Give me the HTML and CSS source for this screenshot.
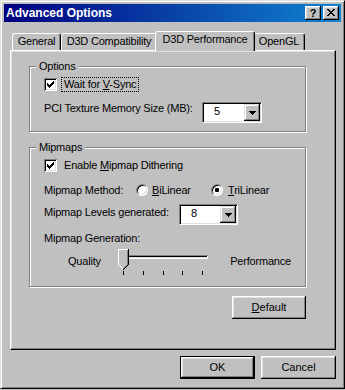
FILE: index.html
```html
<!DOCTYPE html>
<html lang="en">

<head>
    <meta charset="UTF-8">
    <title>Advanced Options</title>
    <link rel="stylesheet" href="styles.css">
</head>

<body>
    <div class="window">
        <div class="titlebar">
            <span class="caption">Advanced Options</span>
            <span class="capbtn help">?</span>
            <span class="capbtn close">
                <svg width="8" height="7" viewBox="0 0 8 7" shape-rendering="crispEdges">
                    <path d="M0 0h2v1H0z M6 0h2v1H6z M1 1h2v1H1z M5 1h2v1H5z M2 2h4v1H2z M3 3h2v1H3z M2 4h4v1H2z M1 5h2v1H1z M5 5h2v1H5z M0 6h2v1H0z M6 6h2v1H6z" fill="#000"/>
                </svg>
            </span>
        </div>

        <div class="sheet">
            <ul class="tabs">
                <li class="tab t-general">General</li>
                <li class="tab t-compat">D3D Compatibility</li>
                <li class="tab t-perf active">D3D Performance</li>
                <li class="tab t-gl">OpenGL</li>
            </ul>

            <div class="panel">
                <div class="group options">
                    <span class="legend">Options</span>
                    <div class="check-row">
                        <span class="checkbox">
                            <svg width="13" height="13" viewBox="0 0 13 13" shape-rendering="crispEdges">
                                <path d="M3 5h1v3H3z M4 6h1v3H4z M5 7h1v3H5z M6 6h1v3H6z M7 5h1v3H7z M8 4h1v3H8z M9 3h1v3H9z" fill="#000"/>
                            </svg>
                        </span>
                        <span class="check-label focus">Wait for <u>V</u>-Sync</span>
                    </div>
                    <div class="combo-row">
                        <span class="label pci-label">PCI Texture Memory Size (MB):</span>
                        <div class="combo pci-combo">
                            <span class="value">5</span>
                            <span class="drop">
                                <svg width="7" height="4" viewBox="0 0 7 4" shape-rendering="crispEdges">
                                    <path d="M0 0h7v1H0z M1 1h5v1H1z M2 2h3v1H2z M3 3h1v1H3z" fill="#000"/>
                                </svg>
                            </span>
                        </div>
                    </div>
                </div>

                <div class="group mipmaps">
                    <span class="legend">Mipmaps</span>
                    <div class="check-row">
                        <span class="checkbox">
                            <svg width="13" height="13" viewBox="0 0 13 13" shape-rendering="crispEdges">
                                <path d="M3 5h1v3H3z M4 6h1v3H4z M5 7h1v3H5z M6 6h1v3H6z M7 5h1v3H7z M8 4h1v3H8z M9 3h1v3H9z" fill="#000"/>
                            </svg>
                        </span>
                        <span class="check-label">Enable <u>M</u>ipmap Dithering</span>
                    </div>
                    <div class="method-row">
                        <span class="label method-label">Mipmap Method:</span>
                        <span class="option bi">
                            <span class="radio"></span>
                            <span class="option-text"><u>B</u>iLinear</span>
                        </span>
                        <span class="option tri">
                            <span class="radio checked"></span>
                            <span class="option-text"><u>T</u>riLinear</span>
                        </span>
                    </div>
                    <div class="combo-row levels-row">
                        <span class="label levels-label">Mipmap Levels generated:</span>
                        <div class="combo levels-combo">
                            <span class="value">8</span>
                            <span class="drop">
                                <svg width="7" height="4" viewBox="0 0 7 4" shape-rendering="crispEdges">
                                    <path d="M0 0h7v1H0z M1 1h5v1H1z M2 2h3v1H2z M3 3h1v1H3z" fill="#000"/>
                                </svg>
                            </span>
                        </div>
                    </div>
                    <div class="gen-label">Mipmap Generation:</div>
                    <div class="slider-row">
                        <span class="end quality">Quality</span>
                        <div class="slider">
                            <div class="track"></div>
                            <svg class="thumb" width="11" height="21" viewBox="0 0 11 21" shape-rendering="crispEdges">
                                <path d="M0 0h11v16h-1v1h-1v1h-1v1h-1v1h-1v1h-1v-1h-1v-1h-1v-1h-1v-1h-1v-1H0z" fill="#c0c0c0"/>
                                <path d="M0 0h10v1H1v15H0z M1 16h1v1H1z M2 17h1v1H2z M3 18h1v1H3z M4 19h1v1H4z" fill="#fff"/>
                                <path d="M9 1h1v15H9z M8 16h1v1H8z M7 17h1v1H7z M6 18h1v1H6z M5 19h1v1H5z" fill="#808080"/>
                                <path d="M10 0h1v16h-1z M9 16h1v1H9z M8 17h1v1H8z M7 18h1v1H7z M6 19h1v1H6z M5 20h1v1H5z" fill="#000"/>
                            </svg>
                            <div class="ticks">
                                <i></i><i></i><i></i><i></i><i></i>
                            </div>
                        </div>
                        <span class="end performance">Performance</span>
                    </div>
                </div>

                <button class="btn default-btn"><u>D</u>efault</button>
            </div>

            <div class="actions">
                <button class="btn ok">OK</button>
                <button class="btn">Cancel</button>
            </div>
        </div>
    </div>
</body>

</html>
```

FILE: styles.css
```css
* {
    margin: 0;
    padding: 0;
    box-sizing: border-box;
    list-style: none;
}

body {
    background: #c0c0c0;
    color: #000;
    font: 11px/13px "Liberation Sans", Arial, sans-serif;
    letter-spacing: -0.2px;
}

u {
    text-decoration: underline;
    text-underline-offset: 1px;
}

/* window frame */
.window {
    width: 345px;
    height: 389px;
    padding: 3px;
    background: #c0c0c0;
    border: 1px solid;
    border-color: #dfdfdf #000 #000 #dfdfdf;
    box-shadow: inset 1px 1px #fff, inset -1px -1px #808080;
}

.titlebar {
    height: 18px;
    display: flex;
    align-items: center;
    padding: 0 2px;
    background: linear-gradient(to right, #000080, #1084d0);
    color: #fff;
}

.caption {
    flex: 1;
    font-weight: bold;
    font-size: 12px;
    letter-spacing: 0;
}

.capbtn {
    width: 16px;
    height: 14px;
    display: flex;
    align-items: center;
    justify-content: center;
    background: #c0c0c0;
    color: #000;
    font-weight: bold;
    font-size: 11px;
    letter-spacing: 0;
    box-shadow: inset -1px -1px #000, inset 1px 1px #fff, inset -2px -2px #808080, inset 2px 2px #dfdfdf;
}

.help {
    margin-right: 2px;
}

.close svg {
    margin-top: -1px;
}

/* tabs */
.sheet {
    padding: 0 5px 0 6px;
    margin-top: 9px;
}

.tabs {
    display: flex;
    align-items: flex-end;
    height: 19px;
    padding-left: 2px;
    position: relative;
    z-index: 1;
}

.tab {
    height: 17px;
    line-height: 15px;
    text-align: center;
    background: #c0c0c0;
    border-top: 1px solid #fff;
    border-left: 1px solid #fff;
    border-right: 1px solid #000;
    border-radius: 3px 3px 0 0;
    box-shadow: inset -1px 0 #808080;
}

.t-general { width: 49px; }
.t-compat { width: 96px; }
.t-gl { width: 52px; }

.tab.active {
    width: 100px;
    height: 20px;
    margin: 0 -2px -1px;
    padding-bottom: 3px;
    position: relative;
    z-index: 2;
}

.panel {
    width: 326px;
    height: 300px;
    display: flex;
    flex-direction: column;
    padding: 15px 29px 0 18px;
    border: 1px solid;
    border-color: #fff #000 #000 #fff;
    box-shadow: inset -1px -1px #808080, inset 1px 1px #dfdfdf;
}

/* group boxes */
.group {
    position: relative;
    border: 1px solid #808080;
    box-shadow: 1px 1px 0 #fff, inset 1px 1px 0 #fff;
}

.options {
    padding: 10px 14px 8px;
}

.mipmaps {
    margin-top: 15px;
    padding: 10px 14px 11px;
}

.legend {
    position: absolute;
    top: -7px;
    left: 6px;
    padding: 0 3px;
    background: #c0c0c0;
}

.check-row {
    height: 15px;
    display: flex;
    align-items: center;
    margin-bottom: 10px;
}

.mipmaps .check-row {
    margin-bottom: 9px;
}

.checkbox {
    width: 13px;
    height: 13px;
    background: #fff;
    box-shadow: inset 1px 1px #808080, inset -1px -1px #fff, inset 2px 2px #000, inset -2px -2px #dfdfdf;
}

.checkbox svg {
    display: block;
}

.check-label {
    margin-left: 4px;
    padding: 0 2px;
    border: 1px solid transparent;
}

.check-label.focus {
    border: 1px dotted #000;
}

.combo-row {
    display: flex;
    align-items: flex-start;
    height: 21px;
}

.pci-label { width: 158px; }
.levels-label { width: 135px; margin-top: 2px; }

.combo {
    height: 21px;
    display: flex;
    padding: 1px;
    background: #fff;
    border: 1px solid;
    border-color: #808080 #fff #fff #808080;
    box-shadow: inset 1px 1px #000, inset -1px -1px #dfdfdf;
}

.pci-combo { width: 60px; }
.levels-combo { width: 59px; }

.combo .value {
    flex: 1;
    padding-left: 10px;
    line-height: 15px;
}

.drop {
    width: 16px;
    height: 17px;
    display: flex;
    align-items: center;
    justify-content: center;
    background: #c0c0c0;
    box-shadow: inset -1px -1px #000, inset 1px 1px #dfdfdf, inset -2px -2px #808080, inset 2px 2px #fff;
}

/* radio row */
.method-row {
    height: 16px;
    display: flex;
    align-items: center;
    margin-bottom: 6px;
}

.method-label { width: 92px; }

.option {
    display: flex;
    align-items: center;
}

.option.bi { width: 75px; }

.radio {
    width: 12px;
    height: 12px;
    position: relative;
    border-radius: 50%;
    background: #fff;
    border: 1px solid;
    border-color: #808080 #fff #fff #808080;
    box-shadow: inset 1px 1px #000, inset -1px -1px #dfdfdf;
}

.radio.checked::after {
    content: "";
    position: absolute;
    left: 3px;
    top: 3px;
    width: 4px;
    height: 4px;
    border-radius: 1px;
    background: #000;
}

.option-text {
    margin-left: 4px;
}

.tri .option-text {
    margin-left: 5px;
}

.levels-row {
    margin-bottom: 7px;
}

.gen-label {
    margin-bottom: 4px;
}

/* slider */
.slider-row {
    display: flex;
    height: 26px;
}

.end {
    margin-top: 6px;
}

.quality {
    width: 76px;
    padding-left: 24px;
}

.performance {
    margin-left: 22px;
}

.slider {
    width: 90px;
    position: relative;
}

.track {
    width: 86px;
    height: 4px;
    margin: 6px 0 0 4px;
    box-shadow: inset 1px 1px #808080, inset -1px -1px #fff, inset 2px 2px #000, inset -2px -2px #dfdfdf;
}

.thumb {
    position: absolute;
    left: 0;
    top: 0;
}

.ticks {
    width: 80px;
    height: 4px;
    margin: 12px 0 0 5px;
    display: flex;
    justify-content: space-between;
}

.ticks i {
    width: 1px;
    height: 4px;
    background: #000;
}

/* buttons */
.btn {
    width: 75px;
    height: 23px;
    background: #c0c0c0;
    border: none;
    font: inherit;
    color: #000;
    box-shadow: inset -1px -1px #000, inset 1px 1px #fff, inset -2px -2px #808080, inset 2px 2px #dfdfdf;
}

.default-btn {
    width: 74px;
    margin-top: 9px;
    align-self: flex-end;
}

.btn.ok {
    border: 1px solid #000;
}

.actions {
    display: flex;
    justify-content: flex-end;
    gap: 6px;
    margin-top: 6px;
}
```
